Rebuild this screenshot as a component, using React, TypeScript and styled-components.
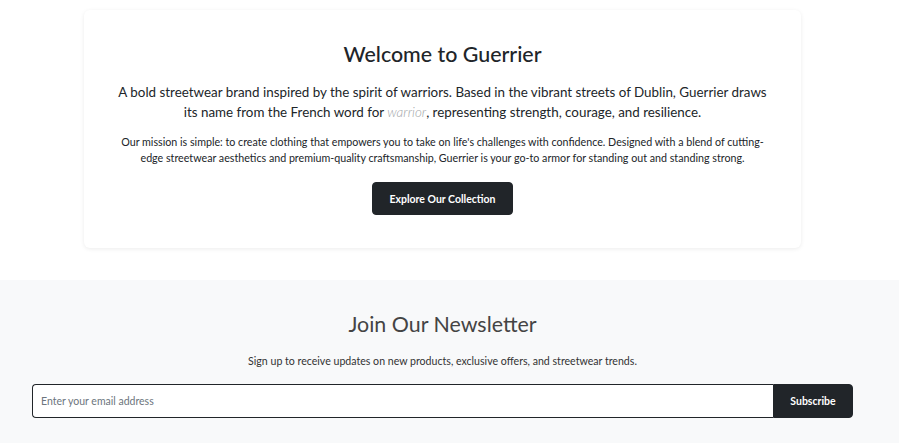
import React from "react";
import styled, { createGlobalStyle } from "styled-components";

const Global = createGlobalStyle`
  html, body { margin: 0; padding: 0; background: #ffffff; }
  body { font-family: Lato, "Open Sans", sans-serif; color: #212529; }
  * { box-sizing: border-box; }
`;

const Page = styled.div`
  width: 100%;
`;

const Hero = styled.section`
  padding: 10px 98px 32px 84px;
`;

const Card = styled.div`
  background: #fff;
  border-radius: 6px;
  box-shadow: 0 1px 4px rgba(0, 0, 0, 0.08);
  padding: 32px 32px 33px;
  display: flex;
  flex-direction: column;
  align-items: center;
  text-align: center;
`;

const Title = styled.h2`
  margin: 0 0 16px;
  font-size: 21.4px;
  line-height: 24px;
  font-weight: 500;
  color: #212529;
`;

const Lead = styled.p`
  margin: 0 0 12px;
  font-size: 13.38px;
  line-height: 20px;
  color: #212529;
`;

const Word = styled.em`
  color: #a0a4a8;
  font-style: italic;
  font-weight: 300;
`;

const Body = styled.p`
  margin: 0 0 16px;
  font-size: 10.7px;
  line-height: 16px;
  color: #212529;
`;

const DarkButton = styled.button`
  font-family: inherit;
  background: #212529;
  color: #fff;
  border: 1px solid #212529;
  font-weight: 700;
  font-size: 10.5px;
  height: 33px;
  padding: 0 16px;
  border-radius: 4px;
  cursor: pointer;
`;

const Newsletter = styled.section`
  background: #f8f9fa;
  padding: 32px 46px 40px 32px;
  text-align: center;
`;

const NewsTitle = styled.h3`
  margin: 0 0 17px;
  font-size: 21.4px;
  line-height: 24px;
  font-weight: 400;
  color: #444;
`;

const NewsText = styled.p`
  margin: 0 0 15px;
  font-size: 10.6px;
  line-height: 16px;
  color: #333;
`;

const Group = styled.form`
  display: flex;
  height: 34px;
`;

const Email = styled.input`
  flex: 1;
  font-family: inherit;
  font-size: 10.5px;
  padding: 0 8px;
  border: 1px solid #212529;
  border-right: none;
  border-radius: 4px 0 0 4px;
  background: #fff;
  outline: none;
  &::placeholder { color: #6c757d; }
`;

const Subscribe = styled(DarkButton)`
  width: 80px;
  height: 34px;
  padding: 0;
  border-radius: 0 4px 4px 0;
`;

export default function App() {
  return (
    <Page>
      <Global />
      <Hero>
        <Card>
          <Title>Welcome to Guerrier</Title>
          <Lead>
            A bold streetwear brand inspired by the spirit of warriors. Based in the vibrant streets of Dublin, Guerrier draws its name from the French word for <Word>warrior</Word>, representing strength, courage, and resilience.
          </Lead>
          <Body>
            Our mission is simple: to create clothing that empowers you to take on life's challenges with confidence. Designed with a blend of cutting-edge streetwear aesthetics and premium-quality craftsmanship, Guerrier is your go-to armor for standing out and standing strong.
          </Body>
          <DarkButton type="button">Explore Our Collection</DarkButton>
        </Card>
      </Hero>
      <Newsletter>
        <NewsTitle>Join Our Newsletter</NewsTitle>
        <NewsText>Sign up to receive updates on new products, exclusive offers, and streetwear trends.</NewsText>
        <Group onSubmit={(e) => e.preventDefault()}>
          <Email type="email" placeholder="Enter your email address" />
          <Subscribe type="submit">Subscribe</Subscribe>
        </Group>
      </Newsletter>
    </Page>
  );
}
